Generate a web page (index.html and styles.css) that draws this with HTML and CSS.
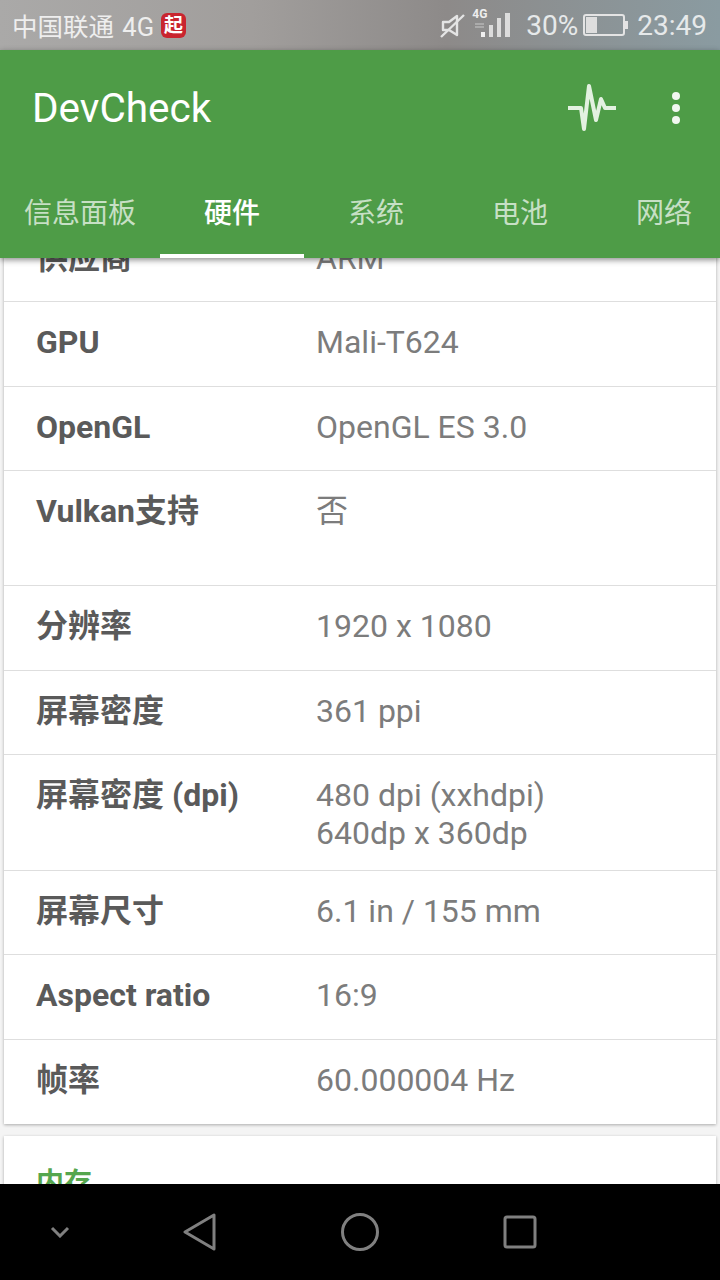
FILE: index.html
```html
<!doctype html>
<html lang="zh-CN">
<head>
    <meta charset="UTF-8">
    <title>DevCheck</title>
    <link rel="stylesheet" href="styles.css">
</head>
<body>
<div class="phone">
    <div class="statusbar">
        <span class="carrier">中国联通 4G</span>
        <span class="badge">起</span>
        <span class="spacer"></span>
        <svg class="mute" width="25" height="24" viewBox="0 0 25 24">
            <path d="M3 8h6l8-6v19l-8-5H3z" fill="none" stroke="#e4e4e4" stroke-width="2.4" stroke-linejoin="round"/>
            <path d="M1 23L24 1" stroke="#e4e4e4" stroke-width="2.4"/>
        </svg>
        <div class="signal">
            <span class="net">4G</span>
            <svg width="38" height="28" viewBox="0 0 38 28">
                <path d="M3 15h9M3 18h9" stroke="#b5b5b5" stroke-width="1.5"/>
                <rect x="9" y="23" width="4" height="5" fill="#f0f0f0"/>
                <rect x="17" y="16" width="4" height="12" fill="#dcdcdc"/>
                <rect x="25" y="9" width="4" height="19" fill="#dcdcdc"/>
                <rect x="33" y="4" width="5" height="24" fill="#dcdcdc"/>
            </svg>
        </div>
        <span class="percent">30%</span>
        <svg class="battery" width="45" height="22" viewBox="0 0 45 22">
            <rect x="1" y="1" width="40" height="20" rx="2" fill="none" stroke="#e4e4e4" stroke-width="2"/>
            <rect x="3" y="3" width="11" height="16" fill="#dedede"/>
            <rect x="42" y="7" width="3" height="8" fill="#e4e4e4"/>
        </svg>
        <span class="clock">23:49</span>
    </div>

    <div class="header">
        <div class="appbar">
            <span class="title">DevCheck</span>
            <svg class="pulse" width="48" height="48" viewBox="0 0 48 48">
                <path d="M0 24H13L16 45L21 2L28 36L33 15L37 24H48" fill="none" stroke="#e3f1e1" stroke-width="4" stroke-linejoin="round"/>
            </svg>
            <div class="more">
                <i></i><i></i><i></i>
            </div>
        </div>
        <ul class="tabs">
            <li class="tab-first">信息面板</li>
            <li class="tab-on">硬件</li>
            <li>系统</li>
            <li>电池</li>
            <li>网络</li>
        </ul>
    </div>

    <div class="content">
        <div class="card card-display">
            <div class="row"><div class="label">供应商</div><div class="value">ARM</div></div>
            <div class="row"><div class="label">GPU</div><div class="value">Mali-T624</div></div>
            <div class="row"><div class="label">OpenGL</div><div class="value">OpenGL ES 3.0</div></div>
            <div class="row row-tall"><div class="label">Vulkan支持</div><div class="value">否</div></div>
            <div class="row"><div class="label">分辨率</div><div class="value">1920 x 1080</div></div>
            <div class="row"><div class="label">屏幕密度</div><div class="value">361 ppi</div></div>
            <div class="row row-double"><div class="label">屏幕密度 (dpi)</div><div class="value">480 dpi (xxhdpi)<br>640dp x 360dp</div></div>
            <div class="row"><div class="label">屏幕尺寸</div><div class="value">6.1 in / 155 mm</div></div>
            <div class="row"><div class="label">Aspect ratio</div><div class="value">16:9</div></div>
            <div class="row row-last"><div class="label">帧率</div><div class="value">60.000004 Hz</div></div>
        </div>
        <div class="card card-memory">
            <div class="card-title">内存</div>
        </div>
    </div>

    <div class="navbar">
        <svg width="20" height="12" viewBox="0 0 20 12">
            <path d="M2 2l8 8 8-8" fill="none" stroke="#808080" stroke-width="3"/>
        </svg>
        <svg width="34" height="38" viewBox="0 0 34 38">
            <path d="M31 2V36L2 19z" fill="none" stroke="#808080" stroke-width="3" stroke-linejoin="round"/>
        </svg>
        <svg width="38" height="38" viewBox="0 0 38 38">
            <circle cx="19" cy="19" r="17.5" fill="none" stroke="#808080" stroke-width="3"/>
        </svg>
        <svg width="34" height="34" viewBox="0 0 34 34">
            <rect x="2" y="2" width="30" height="30" rx="2" fill="none" stroke="#808080" stroke-width="3"/>
        </svg>
    </div>
</div>
</body>
</html>
```

FILE: styles.css
```css
*{
    margin: 0;
    padding: 0;
    box-sizing: border-box;
}
ul{
    list-style: none;
}
body{
    font-family: Roboto, "Noto Sans CJK SC", sans-serif;
    background: #000;
}
.phone{
    width: 720px;
    height: 1280px;
    display: flex;
    flex-direction: column;
    overflow: hidden;
    background: #f4f4f4;
}

/* status bar */
.statusbar{
    height: 50px;
    flex: none;
    display: flex;
    align-items: center;
    padding: 0 13px 0 12px;
    color: #eee;
    font-size: 25.5px;
    background: linear-gradient(90deg, #aaa9a8 0%, #a19e9c 35%, #8d8a89 62%, #8a9ba1 100%);
}
.carrier{
    white-space: nowrap;
    word-spacing: 2px;
    margin-top: -2px;
}
.badge{
    width: 25px;
    height: 25px;
    margin-left: 7px;
    border-radius: 6px;
    background: #c9252f;
    color: #fff;
    font-size: 19px;
    font-weight: 700;
    line-height: 25px;
    text-align: center;
}
.spacer{
    flex: 1;
}
.mute{
    margin: 2px 7px 0 0;
}
.signal{
    position: relative;
    width: 38px;
    height: 28px;
    margin: -4px 16px 0 0;
}
.net{
    position: absolute;
    left: 0;
    top: -2px;
    font-size: 12px;
    font-weight: 700;
    color: #eee;
}
.percent,
.clock{
    color: #e6e9ea;
    font-size: 28px;
}
.battery{
    margin: 0 9px 0 5px;
}

/* green header */
.header{
    height: 208px;
    flex: none;
    background: #4e9c47;
    box-shadow: 0 2px 6px rgba(0, 0, 0, .45);
    position: relative;
    z-index: 2;
    overflow: hidden;
}
.appbar{
    height: 116px;
    display: flex;
    align-items: center;
    padding: 0 40px 0 32px;
}
.title{
    flex: 1;
    color: #fff;
    font-size: 40.5px;
}
.pulse{
    margin-right: 56px;
}
.more{
    width: 8px;
    display: flex;
    flex-direction: column;
    gap: 4px;
}
.more i{
    width: 8px;
    height: 8px;
    border-radius: 50%;
    background: #f1f7f0;
}
.tabs{
    display: flex;
    width: 736px;
    height: 92px;
}
.tabs li{
    width: 144px;
    flex: none;
    text-align: center;
    font-size: 28px;
    line-height: 95px;
    color: rgba(255, 255, 255, .7);
}
.tabs .tab-first{
    width: 160px;
}
.tabs .tab-on{
    color: #fff;
    font-weight: 500;
    border-bottom: 4px solid #fff;
}

/* scrolled list */
.content{
    flex: 1;
    min-height: 0;
    overflow: hidden;
}
.card{
    margin: 0 4px;
    background: #fff;
    box-shadow: 0 1px 3px rgba(0, 0, 0, .3);
}
.card-display{
    margin-top: -40.5px;
}
.row{
    height: 84.5px;
    padding-top: 21px;
    display: flex;
    border-bottom: 1px solid #dedede;
    font-size: 32px;
    line-height: 38px;
}
.row-tall{
    height: 115px;
}
.row-double{
    height: 115.5px;
}
.row-last{
    border-bottom: none;
}
.label{
    width: 312px;
    padding-left: 32px;
    color: #5a5a5a;
    font-weight: 700;
}
.value{
    color: #7c7c7c;
}
.card-memory{
    margin-top: 12px;
    height: 120px;
    padding: 25px 32px 0;
}
.card-title{
    color: #55a64e;
    font-size: 28px;
    font-weight: 700;
}

/* nav buttons */
.navbar{
    height: 96px;
    flex: none;
    background: #000;
    display: grid;
    grid-template-columns: 120px 160px 160px 160px 120px;
    align-items: center;
    justify-items: center;
}
```
